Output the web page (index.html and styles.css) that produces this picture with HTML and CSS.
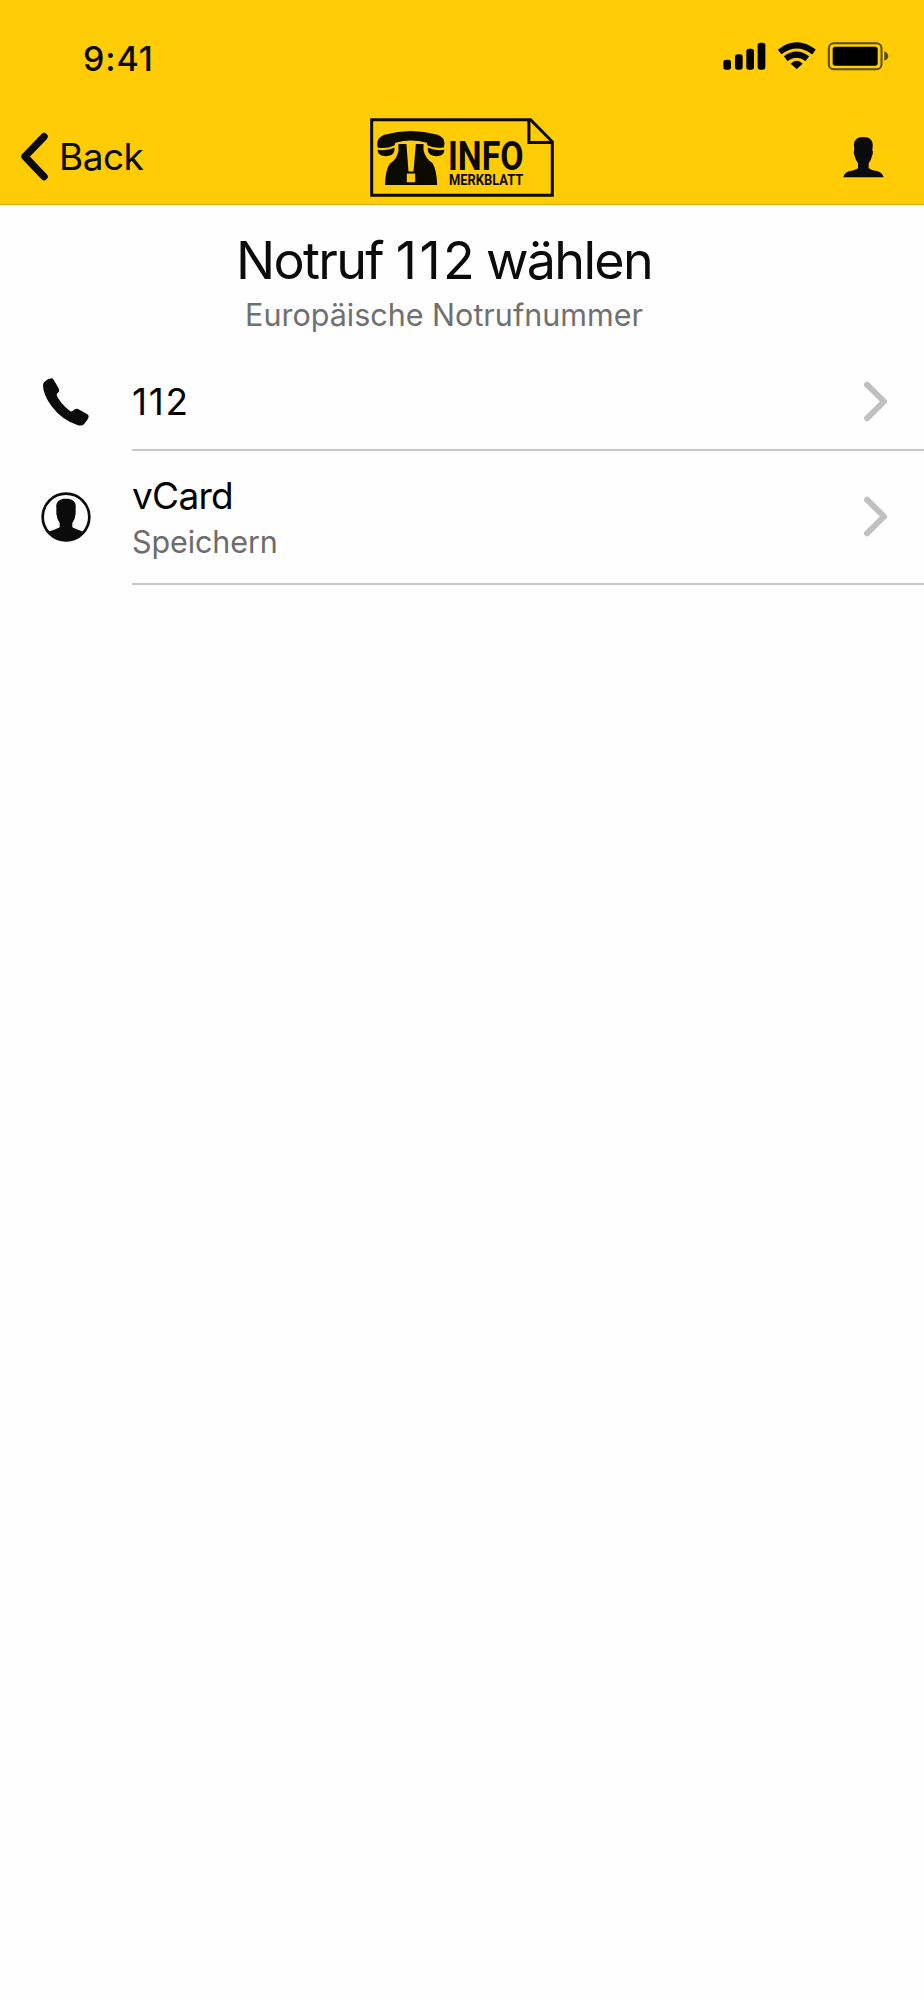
FILE: index.html
```html
<!DOCTYPE html>
<html lang="de">
<head>
<meta charset="utf-8">
<title>Notruf 112 wählen</title>
<link rel="stylesheet" href="styles.css">
</head>
<body>
<header class="header">
  <div class="status">
    <span class="time">9:41</span>
    <svg class="status-icons" viewBox="66 60 504 96" aria-hidden="true">
      <rect x="70" y="119" width="23" height="30" rx="8"/>
      <rect x="105" y="103" width="23" height="46" rx="8"/>
      <rect x="139" y="86" width="23" height="63" rx="8"/>
      <rect x="173" y="68" width="23" height="81" rx="8"/>
      <g fill="none" stroke="#000" stroke-width="18">
        <path d="M239 96Q290 56 342 96"/>
        <path d="M257 116Q290 92 322 116"/>
      </g>
      <path d="M272 131Q290 114 308 131L290 147Z"/>
      <rect x="386.500" y="69.500" width="158" height="78" rx="15" fill="none" stroke="#574c22" stroke-width="6"/>
      <rect x="398" y="80" width="135" height="57" rx="8"/>
      <path d="M553 94Q565 100 565 108Q565 117 553 122Z" fill="#574c22"/>
    </svg>
  </div>
  <nav class="nav">
    <a class="back">
      <svg class="back-icon" viewBox="62 335 86 148" aria-hidden="true"><path d="M134 349L76 409L134 470"/></svg>
      <span>Back</span>
    </a>
    <svg class="logo" viewBox="31 24 550 236" role="img" aria-label="Info Merkblatt">
      <g fill="none" stroke="#0b0a00" stroke-width="9">
        <path d="M36 29H511L576 95V255H36Z"/>
        <path d="M506 29V97H576"/>
      </g>
      <path d="M54 112C50 91 57 81 74 74Q153 52 233 74C250 81 257 91 252 111Q229 116 203 106L201 98Q153 84 107 98L104 106Q80 117 54 112Z"/>
      <path d="M54 119Q80 123 104 113Q106 127 96 134Q83 141 66 136Q53 131 54 119Z"/>
      <path d="M253 119Q228 123 204 113Q202 127 212 134Q225 141 242 136Q254 131 253 119Z"/>
      <path d="M116 102H140L146 184H161L168 102H191V120Q197 145 217 158Q230 176 232 224H76Q77 177 91 160Q113 146 116 121Z"/>
      <rect x="141" y="190" width="25" height="26" fill="#ffcc05"/>
      <text class="logo-info" x="264" y="179" textLength="226" lengthAdjust="spacingAndGlyphs">INFO</text>
      <text class="logo-sub" x="267" y="224" textLength="222" lengthAdjust="spacingAndGlyphs">MERKBLATT</text>
    </svg>
    <svg class="profile" viewBox="430 346 123 124" aria-hidden="true">
      <path d="M491 348C510 348 521 358 519 376L518 388Q522 393 517 405Q514 419 507 427V440Q511 447 532 450Q549 455 552 469H431Q434 454 450 450Q473 446 475 440V427Q468 418 465 405Q460 393 464 388L463 376C461 358 472 348 491 348Z"/>
    </svg>
  </nav>
</header>
<main>
  <section class="intro">
    <h1 class="title">Notruf <span class="ones">11</span>2 wählen</h1>
    <p class="subtitle">Europäische Notrufnummer</p>
  </section>
  <ul class="list">
    <li class="row">
      <svg class="row-icon" viewBox="60 48 156 156" aria-hidden="true">
        <path d="M72 67Q82 57 94 55Q98 55 101 59L115 83Q119 91 117 95Q109 100 110 106Q120 130 151 154Q156 156 166 147Q172 145 178 149L202 163Q207 167 206 171Q203 181 192 193Q186 198 174 196Q126 181 95 139Q69 102 69 77Q69 71 72 67Z"/>
      </svg>
      <div class="row-body row-single">
        <span class="label number">112</span>
        <svg class="chevron" viewBox="130 60 76 124" aria-hidden="true"><path d="M142 71L194 122L142 173"/></svg>
      </div>
    </li>
    <li class="row">
      <svg class="row-icon" viewBox="60 392 156 156" aria-hidden="true">
        <circle cx="138" cy="470" r="70" fill="none" stroke="#0b0b0b" stroke-width="8"/>
        <path d="M138 415C158 415 169 424 167 441V460Q165 478 157 488V501Q169 508 190 514Q169 543 138 543Q107 543 86 514Q107 508 119 501V488Q111 477 109 460V441C107 424 118 415 138 415Z"/>
      </svg>
      <div class="row-body row-double">
        <div class="labels">
          <span class="label">vCard</span>
          <span class="detail">Speichern</span>
        </div>
        <svg class="chevron" viewBox="130 60 76 124" aria-hidden="true"><path d="M142 71L194 122L142 173"/></svg>
      </div>
    </li>
  </ul>
</main>
</body>
</html>
```

FILE: styles.css
```css
* { box-sizing: border-box; }
body {
  margin: 0;
  min-height: 2000px;
  background: #fefefe;
  color: #0b0b0b;
  font-family: Inter, "Liberation Sans", sans-serif;
}
svg { display: block; flex: none; fill: #0b0b0b; }
.header {
  height: 205px;
  background: #ffcc05;
  border-bottom: 1px solid #d9ae08;
}
.status {
  height: 110px;
  padding: 39px 34px 0 83px;
  display: flex;
  justify-content: space-between;
  align-items: flex-start;
}
.time { font-size: 34px; line-height: 40px; font-weight: 550; letter-spacing: 0.9px; }
.status-icons { width: 168px; height: 32px; margin-top: 1px; fill: #000; }
.nav {
  height: 94px;
  padding: 0 40px 0 20px;
  display: grid;
  grid-template-columns: 350px 184px 1fr;
  align-items: center;
}
.back { display: flex; align-items: center; gap: 10px; font-size: 37px; line-height: 44px; letter-spacing: -0.5px; }
.back-icon { width: 29px; height: 49px; margin-bottom: 2px; }
.back-icon path { fill: none; stroke: #0b0b0b; stroke-width: 22; stroke-linecap: round; stroke-linejoin: round; }
.logo { width: 184px; height: 79px; fill: #0b0a00; }
.logo-info { font: 700 124px Roboto, sans-serif; }
.logo-sub { font: 700 43px Roboto, sans-serif; }
.profile { width: 41px; height: 42px; justify-self: end; margin-bottom: 1px; }
.intro { width: 888px; height: 149px; padding-top: 25px; text-align: center; }
.title { margin: 0; font-size: 52px; line-height: 62px; font-weight: 400; letter-spacing: -1.7px; }
.ones { letter-spacing: 2.5px; }
.subtitle { margin: 3px 0 0; font-size: 30.5px; line-height: 40px; color: #707070; }
.list { margin: 0; padding: 0; list-style: none; }
.row { display: flex; align-items: center; padding-left: 40px; }
.row-icon { width: 52px; height: 52px; margin: 0 40px 2px 0; }
.row-body {
  flex: 1;
  display: flex;
  align-items: center;
  justify-content: space-between;
  padding-right: 36px;
  border-bottom: 2px solid #c8c7cc;
}
.row-single { height: 97px; }
.row-double { height: 134px; }
.label { font-size: 37px; line-height: 44px; color: #000; letter-spacing: -0.7px; }
.number { letter-spacing: 1.7px; }
.labels { display: flex; flex-direction: column; gap: 2px; padding-top: 4px; }
.detail { font-size: 30.5px; line-height: 44px; color: #6c6c6c; letter-spacing: -0.1px; }
.chevron { width: 25px; height: 41px; margin-bottom: 1px; }
.chevron path { fill: none; stroke: #c0c0c0; stroke-width: 18; stroke-linecap: round; stroke-linejoin: round; }
```
